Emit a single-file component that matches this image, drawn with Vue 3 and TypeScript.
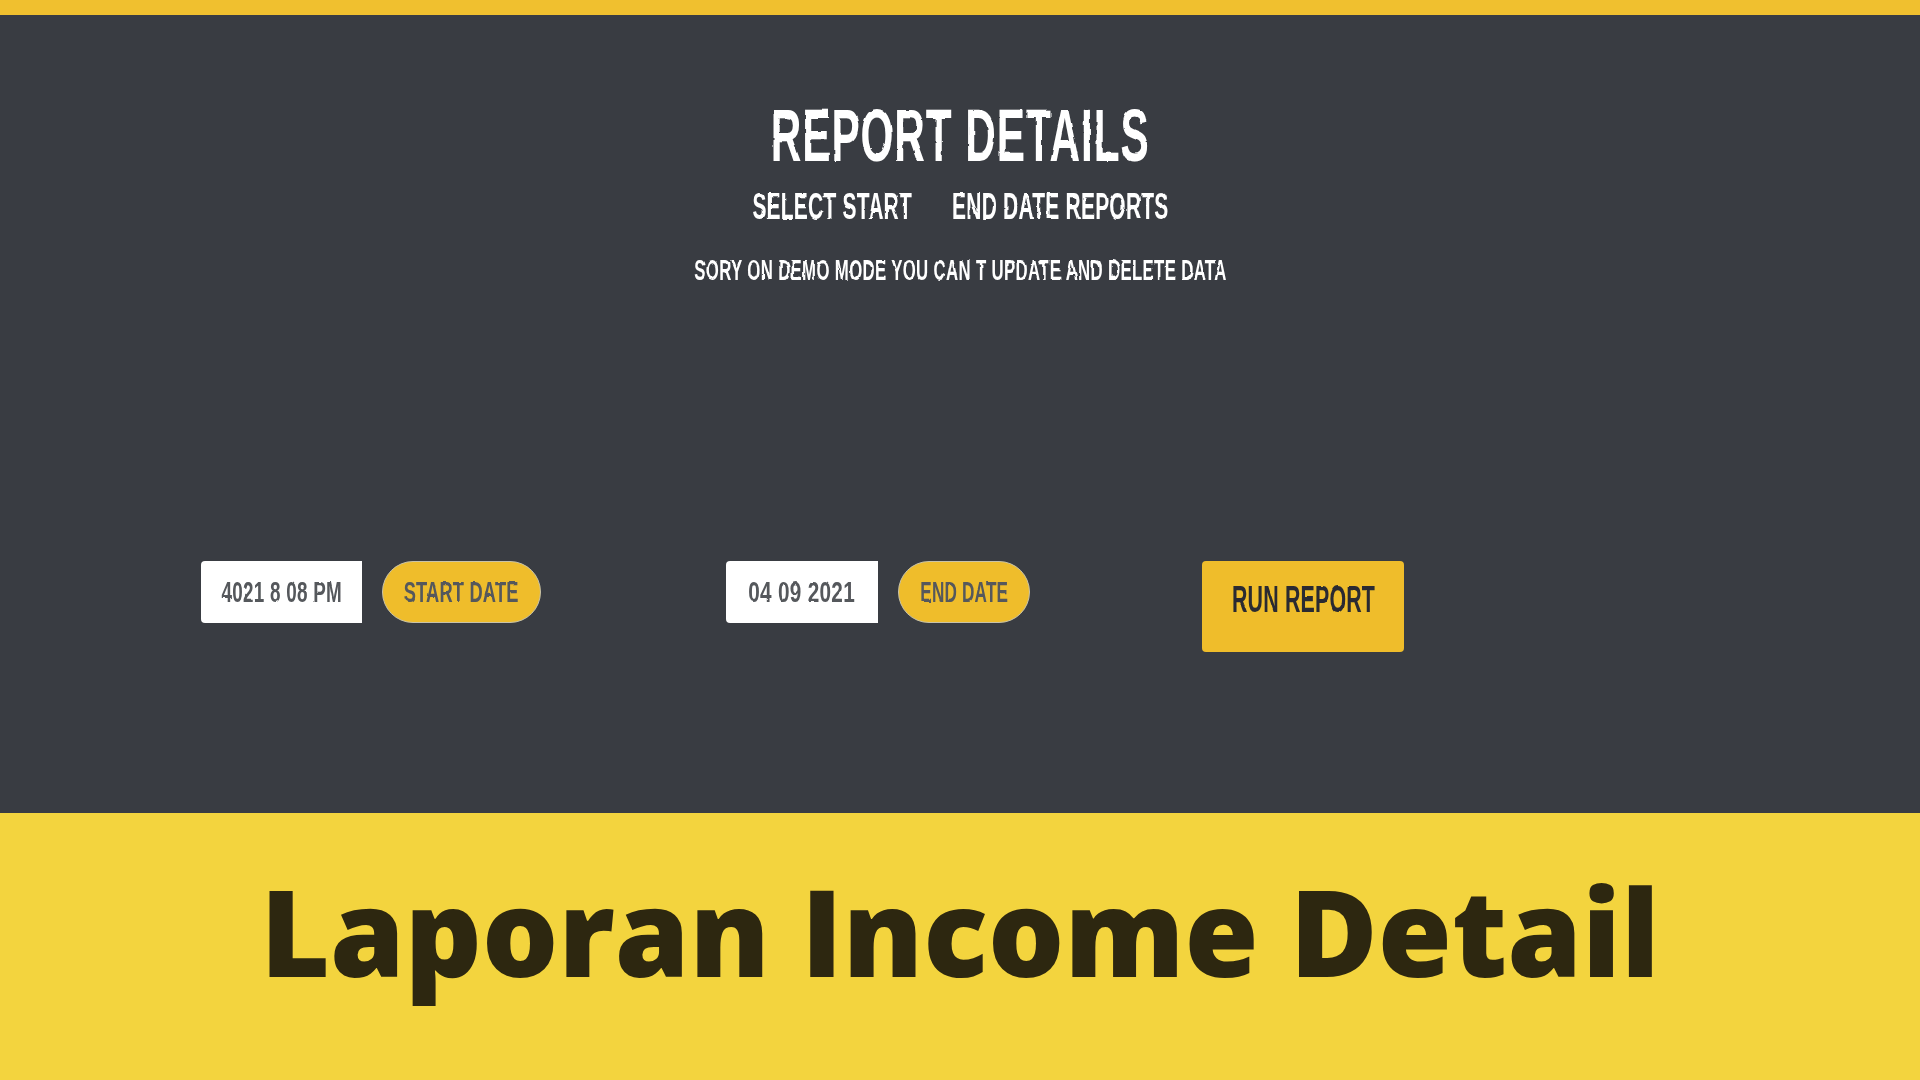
<script setup lang="ts">
const startValue: string = '4021 8 08 PM'
const endValue: string = '04 09 2021'
</script>

<template>
  <div class="page">
    <svg class="defs" width="0" height="0" aria-hidden="true">
      <filter id="rough" x="-5%" y="-5%" width="110%" height="110%">
        <feTurbulence type="fractalNoise" baseFrequency="0.09" numOctaves="2" seed="4" result="noise" />
        <feDisplacementMap in="SourceGraphic" in2="noise" scale="2.5" xChannelSelector="R" yChannelSelector="G" />
        <feGaussianBlur stdDeviation="0.45" />
      </filter>
    </svg>
    <div class="topbar"></div>
    <main class="panel">
      <header class="heading">
        <h1 class="title">REPORT DETAILS</h1>
        <h2 class="subtitle"><span>SELECT START</span><span>END DATE REPORTS</span></h2>
        <p class="notice">SORY ON DEMO MODE YOU CAN T UPDATE AND DELETE DATA</p>
      </header>
      <section class="controls">
        <div class="group group-start">
          <div class="field field-start"><span class="squeeze">{{ startValue }}</span></div>
          <button class="pill pill-start" type="button"><span class="squeeze">START DATE</span></button>
        </div>
        <div class="group group-end">
          <div class="field field-end"><span class="squeeze">{{ endValue }}</span></div>
          <button class="pill pill-end" type="button"><span class="squeeze">END DATE</span></button>
        </div>
        <button class="run" type="button"><span class="squeeze">RUN REPORT</span></button>
      </section>
    </main>
    <footer class="band">
      <span class="caption">Laporan Income Detail</span>
    </footer>
  </div>
</template>

<style>
html, body { margin: 0; background: #393c42; }
</style>

<style scoped>
.page {
  position: relative;
  width: 1920px;
  height: 1080px;
  display: flex;
  flex-direction: column;
  overflow: hidden;
  font-family: "Liberation Sans", sans-serif;
}
.defs { position: absolute; }
.topbar { height: 15px; background: #f0c02f; flex: none; }
.panel {
  height: 798px;
  flex: none;
  background: #393c42;
  display: flex;
  flex-direction: column;
}
.heading {
  display: flex;
  flex-direction: column;
  align-items: center;
  padding-top: 82px;
  color: #fff;
  font-weight: 700;
  filter: url(#rough);
}
.title {
  margin: 0;
  font-size: 74px;
  line-height: 78px;
  font-weight: 700;
  letter-spacing: 1.6px;
  white-space: nowrap;
  transform: scaleX(0.572);
}
.subtitle {
  margin: 12px 0 0;
  display: flex;
  gap: 69px;
  font-size: 36px;
  line-height: 40px;
  font-weight: 700;
  letter-spacing: 0.4px;
  white-space: nowrap;
  transform: scaleX(0.582);
}
.notice {
  margin: 26px 0 0;
  font-size: 29px;
  line-height: 34px;
  letter-spacing: 0.6px;
  white-space: nowrap;
  transform: scaleX(0.578);
}
.controls {
  display: flex;
  align-items: flex-start;
  padding: 274px 0 0 201px;
}
.group { display: flex; gap: 20px; }
.group-start { width: 525px; }
.group-end { width: 476px; }
.squeeze {
  display: inline-block;
  white-space: nowrap;
  transform: scaleX(0.65);
  filter: url(#rough);
}
.field {
  height: 62px;
  box-sizing: border-box;
  background: #fff;
  border-radius: 4px 0 0 4px;
  display: flex;
  align-items: center;
  justify-content: center;
  overflow: hidden;
  color: #55585c;
  font-size: 29px;
  font-weight: 700;
  letter-spacing: 0.4px;
}
.field-start { width: 161px; }
.field-end { width: 152px; }
.field-end .squeeze { transform: scaleX(0.716); }
.pill {
  height: 62px;
  border: 1px solid #c9c3a8;
  border-radius: 31px;
  background: #efbd2b;
  color: #55585c;
  font: inherit;
  font-size: 29px;
  font-weight: 700;
  padding: 0;
  letter-spacing: 0.3px;
  display: flex;
  align-items: center;
  justify-content: center;
  overflow: hidden;
}
.pill-start { width: 159px; }
.pill-start .squeeze { transform: scaleX(0.63); }
.pill-end { width: 132px; }
.pill-end .squeeze { transform: scaleX(0.592); }
.run {
  width: 202px;
  height: 91px;
  border: none;
  border-radius: 4px;
  background: #efbd2b;
  color: #2a2c30;
  font: inherit;
  font-size: 36px;
  font-weight: 700;
  padding: 0 0 14px;
  letter-spacing: 0.3px;
  display: flex;
  align-items: center;
  justify-content: center;
  overflow: hidden;
}
.run .squeeze { transform: scaleX(0.594); }
.band {
  flex: 1;
  background: #f3d43e;
  display: flex;
  justify-content: center;
  align-items: flex-start;
  padding-top: 32px;
}
.caption {
  font-family: "Open Sans", sans-serif;
  font-weight: 800;
  font-size: 120px;
  line-height: 172px;
  color: #2d2710;
  white-space: nowrap;
}
</style>
